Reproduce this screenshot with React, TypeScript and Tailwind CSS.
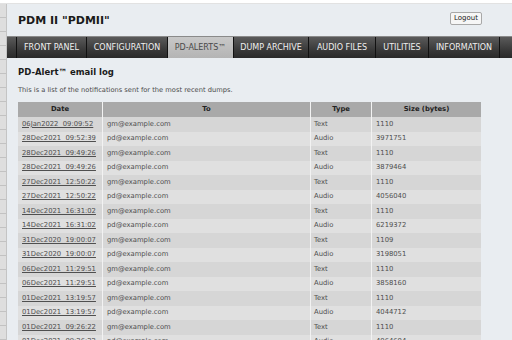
import React from "react";

const rows: [string, string, string, string][] = [
  ["06Jan2022  09:09:52", "gm@example.com", "Text", "1110"],
  ["28Dec2021  09:52:39", "pd@example.com", "Audio", "3971751"],
  ["28Dec2021  09:49:26", "gm@example.com", "Text", "1110"],
  ["28Dec2021  09:49:26", "pd@example.com", "Audio", "3879464"],
  ["27Dec2021  12:50:22", "gm@example.com", "Text", "1110"],
  ["27Dec2021  12:50:22", "pd@example.com", "Audio", "4056040"],
  ["14Dec2021  16:31:02", "gm@example.com", "Text", "1110"],
  ["14Dec2021  16:31:02", "pd@example.com", "Audio", "6219372"],
  ["31Dec2020  19:00:07", "gm@example.com", "Text", "1109"],
  ["31Dec2020  19:00:07", "pd@example.com", "Audio", "3198051"],
  ["06Dec2021  11:29:51", "gm@example.com", "Text", "1110"],
  ["06Dec2021  11:29:51", "pd@example.com", "Audio", "3858160"],
  ["01Dec2021  13:19:57", "gm@example.com", "Text", "1110"],
  ["01Dec2021  13:19:57", "pd@example.com", "Audio", "4044712"],
  ["01Dec2021  09:26:22", "gm@example.com", "Text", "1110"],
  ["01Dec2021  09:26:22", "pd@example.com", "Audio", "4064604"],
];

const tabs = [
  { label: "FRONT PANEL", w: "w-[70px]" },
  { label: "CONFIGURATION", w: "w-[81px]" },
  { label: "PD-ALERTS™", w: "w-[66px]", active: true },
  { label: "DUMP ARCHIVE", w: "w-[75px]" },
  { label: "AUDIO FILES", w: "w-[67px]" },
  { label: "UTILITIES", w: "w-[53px]" },
  { label: "INFORMATION", w: "w-[71px]" },
];

export default function App() {
  return (
    <div
      className="w-[512px] h-[340px] overflow-hidden bg-white flex flex-col"
      style={{ fontFamily: '"DejaVu Sans", Verdana, sans-serif' }}
    >
      <div className="h-[4px] bg-white border-b border-[#e2e2e2] shrink-0" />
      <div className="flex flex-1 min-h-0">
        <div className="w-[7px] shrink-0 border-r border-[#c4c4c4] bg-[repeating-linear-gradient(to_bottom,#dedede_0px,#dedede_13px,#c2c2c2_13px,#c2c2c2_14px)]" />
        <div className="flex-1 bg-[#e9edf1] flex flex-col min-w-0">
          <div className="h-[32px] shrink-0 flex items-center justify-between pl-[11px] pr-[30px]">
            <div className="text-[11px] font-bold text-[#1a1a1a] leading-none pt-[1px]">PDM II "PDMII"</div>
            <div className="h-[13px] w-[32px] mt-[-3px] border border-[#a8a8a8] bg-[#f6f6f6] rounded-[2px] text-[7px] text-[#222] flex items-center justify-center leading-none">
              Logout
            </div>
          </div>
          <div className="h-[22px] shrink-0 flex border-t border-[#8a8a8a] bg-[linear-gradient(to_bottom,#5a5a5a,#3a3a3a_60%,#2a2a2a)]">
            <div className="w-[10px] border-r border-[#111]" />
            {tabs.map((t) => (
              <div
                key={t.label}
                className={
                  t.active
                    ? `${t.w} shrink-0 border-r border-[#111] bg-[linear-gradient(to_bottom,#c8c8c8,#b4b4b4)] text-[#4a4a4a] text-[8px] flex items-center justify-center leading-none`
                    : `${t.w} shrink-0 border-r border-[#111] text-[#f0f0f0] text-[8px] flex items-center justify-center leading-none`
                }
              >
                {t.label}
              </div>
            ))}
            <div className="flex-1" />
          </div>
          <div className="pl-[11px] flex flex-col">
            <div className="mt-[9px] text-[8.5px] font-bold text-[#1a1a1a] leading-[11px]">PD-Alert™ email log</div>
            <div className="mt-[8px] text-[6.7px] text-[#4a4a4a] leading-[9px]">
              This is a list of the notifications sent for the most recent dumps.
            </div>
            <div className="mt-[7px] w-[463px] bg-[#f2f2f2] flex flex-col">
              <div className="grid grid-cols-[84px_207px_60px_109px] gap-x-[1px] h-[15px] text-[6.8px] font-bold text-[#222]">
                <div className="bg-[#a9a9a9] flex items-center justify-center">Date</div>
                <div className="bg-[#a9a9a9] flex items-center justify-center">To</div>
                <div className="bg-[#a9a9a9] flex items-center justify-center">Type</div>
                <div className="bg-[#a9a9a9] flex items-center justify-center">Size (bytes)</div>
              </div>
              {rows.map((r, i) => {
                const bg = i % 2 === 0 ? "bg-[#d6d6d6]" : "bg-[#e0e0e0]";
                return (
                  <div
                    key={i}
                    className="grid grid-cols-[84px_207px_60px_109px] gap-x-[1px] h-[14.5px] text-[6.8px] text-[#4f4f4f] leading-none"
                  >
                    <div className={`${bg} flex items-center pl-[4px]`}>
                      <span className="underline whitespace-pre">{r[0]}</span>
                    </div>
                    <div className={`${bg} flex items-center pl-[4px]`}>{r[1]}</div>
                    <div className={`${bg} flex items-center pl-[3px]`}>{r[2]}</div>
                    <div className={`${bg} flex items-center pl-[4px]`}>{r[3]}</div>
                  </div>
                );
              })}
            </div>
          </div>
        </div>
      </div>
    </div>
  );
}
